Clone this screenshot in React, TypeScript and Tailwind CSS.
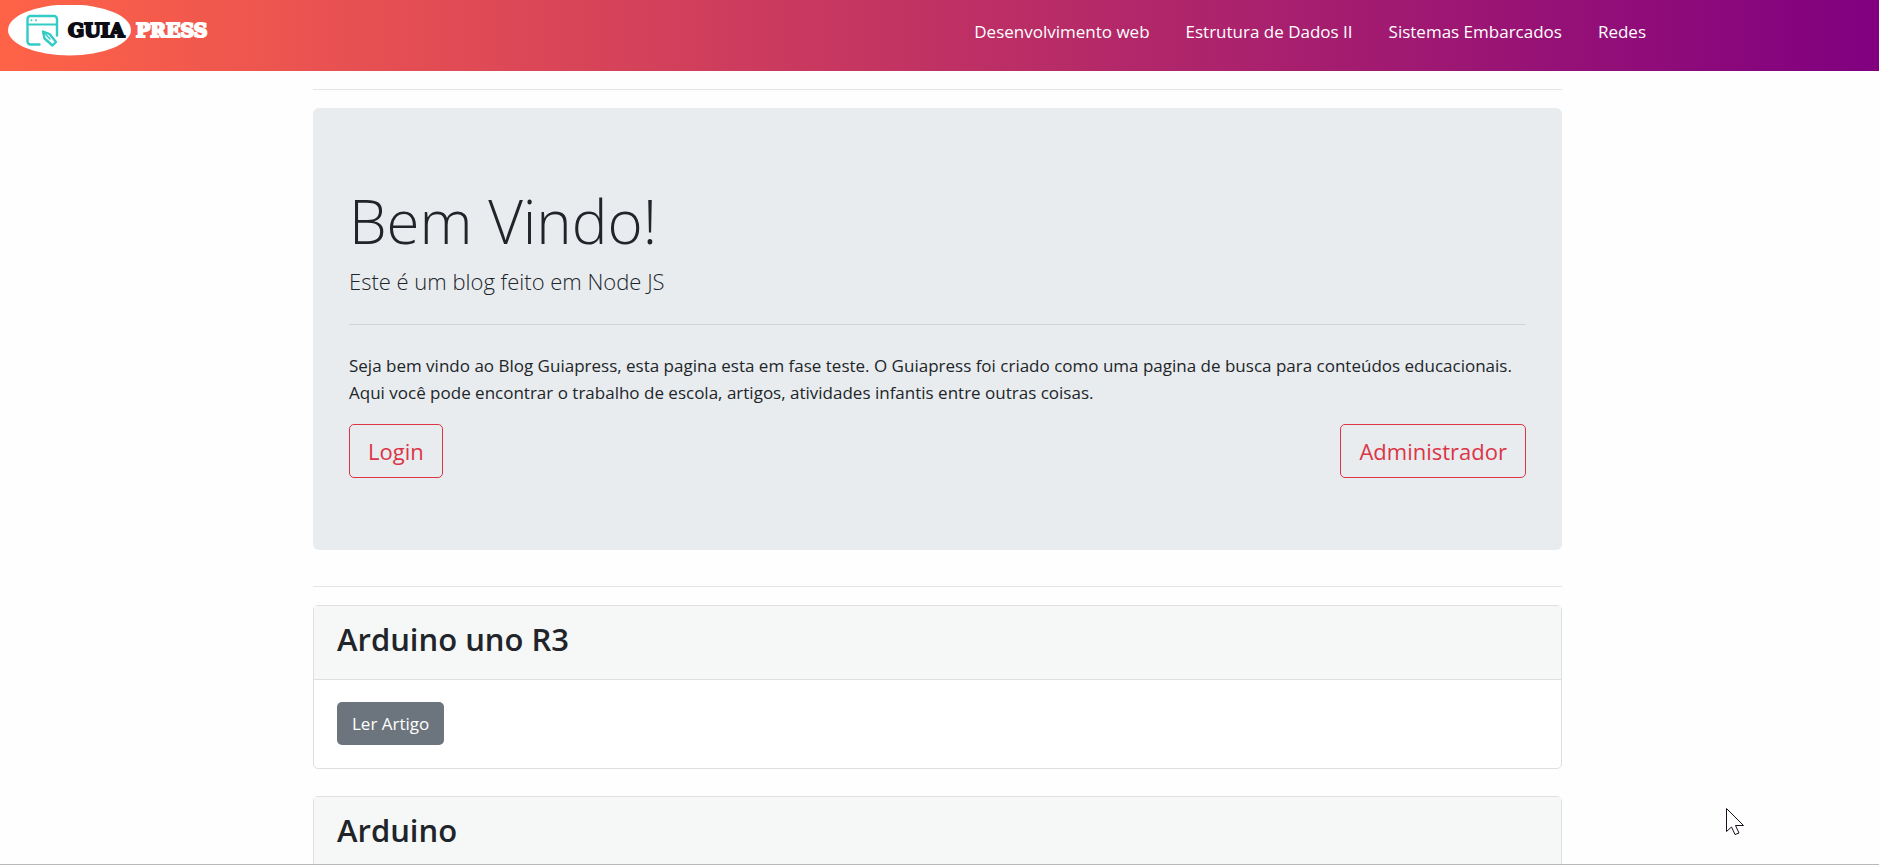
const navLinks = ["Desenvolvimento web", "Estrutura de Dados II", "Sistemas Embarcados", "Redes"];
const articles = [
  { title: "Arduino uno R3", action: "Ler Artigo" },
  { title: "Arduino", action: "" },
];

function Logo() {
  return (
    <a href="#" aria-label="Guia Press" className="block">
      <svg width="212" height="52" viewBox="0 0 212 52" fontFamily="DejaVu Serif, serif" fontWeight="700" fontSize="19" strokeWidth="2">
        <ellipse cx="61.500" cy="25" rx="61.500" ry="25.500" fill="#fff" />
        <g fill="none" stroke="#33cbc6" strokeWidth="2.400" strokeLinecap="round" strokeLinejoin="round">
          <path d="M31.500 39.500H22.500a3 3 0 0 1-3-3V14a3 3 0 0 1 3-3h23.500a3 3 0 0 1 3 3v16.500" />
          <path d="M19.500 19.500h29.500" strokeWidth="1.800" />
          <path d="M35 26.500l1.500 7 8 7 3.500-3.500-6.500-8z" />
          <path d="M36 27.500l6 6.500" strokeWidth="1.500" />
        </g>
        <circle cx="23.500" cy="15.300" r="1" fill="#33cbc6" />
        <circle cx="28" cy="15.300" r="1" fill="#33cbc6" />
        <text x="60" y="32" fill="#0c0c14" stroke="#0c0c14">GUIA</text>
        <text x="128" y="32" fill="#fff" stroke="#fff">PRESS</text>
      </svg>
    </a>
  );
}

function Article({ title, action }: { title: string; action: string }) {
  return (
    <article className="mb-[27px] rounded-[5px] border border-[#dfdfdf] bg-white">
      <header className="border-b border-[#dfdfdf] bg-[#f6f8f7] px-[23px] pt-[14px] pb-[21px]">
        <h3 className="text-[31px] leading-[38px] font-semibold">{title}</h3>
      </header>
      <div className="flex px-[23px] pt-[22px] pb-[23px]">
        {action && (
          <a href="#" className="flex h-[43px] items-center rounded-[5px] bg-[#6c757d] px-[15px] text-white">
            {action}
          </a>
        )}
      </div>
    </article>
  );
}

export default function App() {
  return (
    <div className="relative h-screen overflow-hidden border-b border-[#b9b9b9] bg-[#fefefe] font-['Open_Sans',sans-serif] text-[17px] leading-[27px] text-[#212529]">
      <nav className="flex h-[71px] items-start justify-between bg-[linear-gradient(to_right,#ff6347,#800080)] pt-[5px] pr-[12.4%] pl-2">
        <Logo />
        <ul className="flex gap-9 pt-[13px] text-white">
          {navLinks.map((label) => (
            <li key={label}>
              <a href="#">{label}</a>
            </li>
          ))}
        </ul>
      </nav>
      <div className="pr-1">
        <main className="mx-auto w-full max-w-[1249px] pt-[18px]">
          <hr className="mb-[18px] border-[#e5e5e5]" />
          <section className="mb-9 rounded-[6px] bg-[#e8ecef] px-9 py-[72px]">
            <h1 className="mb-[2px] text-[60px] leading-[83px] font-light">Bem Vindo!</h1>
            <p className="text-[22px] leading-[32px] font-light">Este é um blog feito em Node JS</p>
            <hr className="my-[27px] border-[#cfd3d6]" />
            <p className="mb-[18px]">
              Seja bem vindo ao Blog Guiapress, esta pagina esta em fase teste. O Guiapress foi criado como uma pagina de
              busca para conteúdos educacionais. Aqui você pode encontrar o trabalho de escola, artigos, atividades
              infantis entre outras coisas.
            </p>
            <div className="flex justify-between text-[22px] text-[#dc3545]">
              <a href="#" className="flex h-[54px] items-center rounded-[5px] border border-[#dc3545] px-[18px]">
                Login
              </a>
              <a href="#" className="flex h-[54px] items-center rounded-[5px] border border-[#dc3545] px-[18px]">
                Administrador
              </a>
            </div>
          </section>
          <hr className="mb-[18px] border-[#e5e5e5]" />
          {articles.map((article) => (
            <Article key={article.title} {...article} />
          ))}
        </main>
      </div>
      <svg className="pointer-events-none absolute top-[807px] right-[134px]" width="20" height="29" viewBox="0 0 20 29" aria-hidden="true">
        <path d="M1.500 1.500v23l5-4.500 3.500 7.500 4-1.500-3.500-7.500h8z" fill="#fff" stroke="#1c1020" />
      </svg>
    </div>
  );
}
